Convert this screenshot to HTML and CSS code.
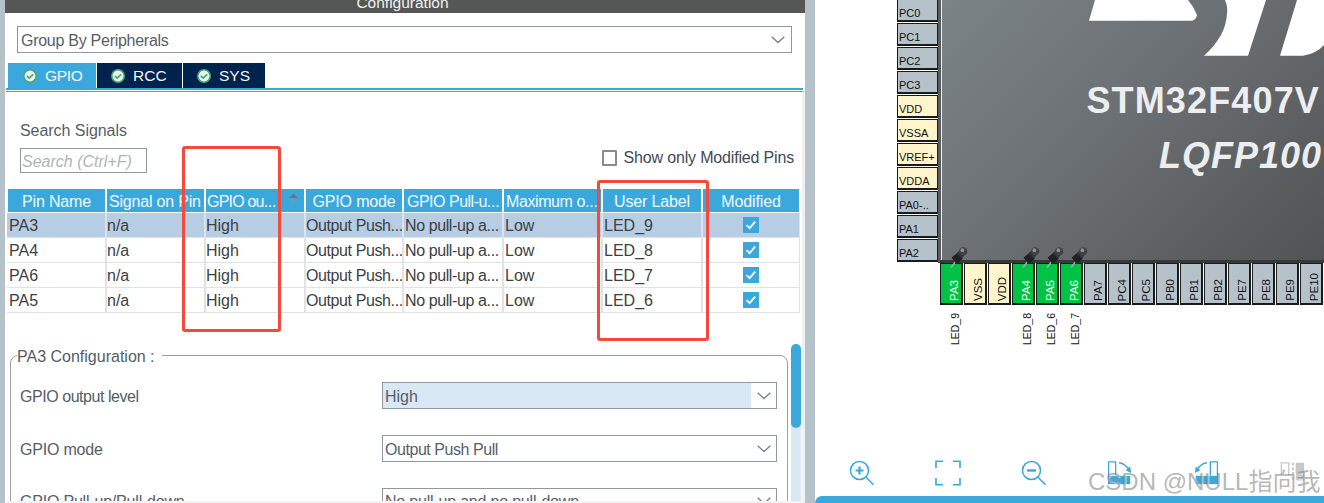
FILE: index.html
```html
<!DOCTYPE html>
<html lang="en">
<head>
<meta charset="utf-8">
<title>Configuration</title>
<link rel="stylesheet" href="styles.css">
</head>
<body>
<svg class="defs" width="0" height="0" aria-hidden="true">
  <defs>
    <symbol id="ok" viewBox="0 0 14 14">
      <circle cx="7" cy="7" r="6.2" fill="#eef4f0" stroke="#47a777" stroke-width="1.6"/>
      <path d="M3.8 6.8l2.4 2.3 4-3.8" fill="none" stroke="#47a777" stroke-width="1.7"/>
    </symbol>
    <symbol id="chev" viewBox="0 0 14 8">
      <path d="M.7.8L7 6.6 13.3.8" fill="none" stroke="#7d8286" stroke-width="1.4"/>
    </symbol>
    <symbol id="tick" viewBox="0 0 16 16">
      <rect width="16" height="16" fill="#3aa8dc"/>
      <path d="M3.6 8.2l3 3 5.6-6.6" fill="none" stroke="#fff" stroke-width="1.8"/>
    </symbol>
    <symbol id="pushpin" viewBox="0 0 18 21">
      <path d="M1 20.5L6.5 13.5" stroke="#a5a9ac" stroke-width="1.6"/>
      <path d="M1.6 10.5L8 5.5l4.8 6-3.2 3.6-4 .8z" fill="#1f2122"/>
      <path d="M6.5 6.2L10.5 2.8l4.6 4.4-3.2 4.4z" fill="#333638"/>
      <circle cx="13.2" cy="4.2" r="4" fill="#3f4345"/>
      <circle cx="12.4" cy="3.2" r="1.9" fill="#8d9194"/>
    </symbol>
  </defs>
</svg>
<div class="app">
  <section class="left">
    <div class="title">Configuration</div>
    <div class="select group">
      <span class="select-text">Group By Peripherals</span>
      <svg class="chev"><use href="#chev"/></svg>
    </div>
    <div class="tabs">
      <div class="tab tab-gpio active"><svg class="ok"><use href="#ok"/></svg>GPIO</div>
      <div class="tab tab-rcc"><svg class="ok"><use href="#ok"/></svg>RCC</div>
      <div class="tab tab-sys"><svg class="ok"><use href="#ok"/></svg>SYS</div>
    </div>
    <div class="pane">
      <div class="search-row">
        <div class="search">
          <div class="search-label">Search Signals</div>
          <input class="search-input" placeholder="Search (Ctrl+F)">
        </div>
        <label class="modified-only"><span class="box"></span>Show only Modified Pins</label>
      </div>

      <div class="table">
        <div class="thead">
          <div class="th center first">Pin Name</div>
          <div class="th tight">Signal on Pin</div>
          <div class="th sorted">GPIO ou<span class="dots">...</span>
            <svg class="sort" viewBox="0 0 12 12"><path d="M6 0l5 5H1z" fill="#6d7478"/><path d="M1 7h10l-5 5z" fill="#5f9fc4"/></svg>
          </div>
          <div class="th center">GPIO mode</div>
          <div class="th pull">GPIO Pull-u<span class="dots">...</span></div>
          <div class="th max">Maximum o<span class="dots">...</span></div>
          <div class="th center">User Label</div>
          <div class="th center">Modified</div>
        </div>
        <div class="tr selected">
          <div class="td first">PA3</div><div class="td">n/a</div><div class="td">High</div><div class="td cut">Output Push<span class="dots">...</span></div><div class="td cut">No pull-up a<span class="dots">...</span></div><div class="td">Low</div><div class="td">LED_9</div>
          <div class="td check"><svg class="tick"><use href="#tick"/></svg></div>
        </div>
        <div class="tr">
          <div class="td first">PA4</div><div class="td">n/a</div><div class="td">High</div><div class="td cut">Output Push<span class="dots">...</span></div><div class="td cut">No pull-up a<span class="dots">...</span></div><div class="td">Low</div><div class="td">LED_8</div>
          <div class="td check"><svg class="tick"><use href="#tick"/></svg></div>
        </div>
        <div class="tr">
          <div class="td first">PA6</div><div class="td">n/a</div><div class="td">High</div><div class="td cut">Output Push<span class="dots">...</span></div><div class="td cut">No pull-up a<span class="dots">...</span></div><div class="td">Low</div><div class="td">LED_7</div>
          <div class="td check"><svg class="tick"><use href="#tick"/></svg></div>
        </div>
        <div class="tr">
          <div class="td first">PA5</div><div class="td">n/a</div><div class="td">High</div><div class="td cut">Output Push<span class="dots">...</span></div><div class="td cut">No pull-up a<span class="dots">...</span></div><div class="td">Low</div><div class="td">LED_6</div>
          <div class="td check"><svg class="tick"><use href="#tick"/></svg></div>
        </div>
      </div>

      <div class="config-wrap">
        <fieldset class="config">
          <legend>PA3 Configuration :</legend>
          <div class="form">
            <div class="form-label narrow">GPIO output level</div>
            <div class="select field highlighted"><span class="select-text">High</span><span class="arrow"><svg class="chev"><use href="#chev"/></svg></span></div>
            <div class="form-label tight">GPIO mode</div>
            <div class="select field"><span class="select-text narrow">Output Push Pull</span><span class="arrow"><svg class="chev"><use href="#chev"/></svg></span></div>
            <div class="form-label tight last">GPIO Pull-up/Pull-down</div>
            <div class="select field last"><span class="select-text tight">No pull-up and no pull-down</span><span class="arrow"><svg class="chev"><use href="#chev"/></svg></span></div>
          </div>
        </fieldset>
        <div class="scrollbar"><div class="thumb"></div></div>
      </div>
    </div>
  </section>

  <section class="right">
    <div class="board">
      <div class="pins-left">
        <div class="pin gray">PC0</div>
        <div class="pin gray">PC1</div>
        <div class="pin gray">PC2</div>
        <div class="pin gray">PC3</div>
        <div class="pin power">VDD</div>
        <div class="pin power">VSSA</div>
        <div class="pin power">VREF+</div>
        <div class="pin power">VDDA</div>
        <div class="pin gray">PA0-..</div>
        <div class="pin gray">PA1</div>
        <div class="pin gray">PA2</div>
      </div>
      <div class="chip">
        <svg class="logo" viewBox="1080 0 244 60">
          <path d="M1095 0L1089 20.7H1192Q1196 20 1197 15Q1194 7 1188 0z" fill="#fff"/>
          <path d="M1225 0Q1228 7 1227 14Q1226 26 1221 35Q1214 47 1204 55.7H1248L1266 0z" fill="#fff"/>
          <path d="M1297 0L1280 55.7H1303Q1316 54 1324 45V0z" fill="#fff"/>
        </svg>
        <div class="chip-name">STM32F407V</div>
        <div class="chip-package">LQFP100</div>
      </div>
      <div class="pins-bottom">
        <div class="vpin green">PA3<svg class="pushpin"><use href="#pushpin"/></svg></div>
        <div class="vpin power">VSS</div>
        <div class="vpin power">VDD</div>
        <div class="vpin green">PA4<svg class="pushpin"><use href="#pushpin"/></svg></div>
        <div class="vpin green">PA5<svg class="pushpin"><use href="#pushpin"/></svg></div>
        <div class="vpin green">PA6<svg class="pushpin"><use href="#pushpin"/></svg></div>
        <div class="vpin gray">PA7</div>
        <div class="vpin gray">PC4</div>
        <div class="vpin gray">PC5</div>
        <div class="vpin gray">PB0</div>
        <div class="vpin gray">PB1</div>
        <div class="vpin gray">PB2</div>
        <div class="vpin gray">PE7</div>
        <div class="vpin gray">PE8</div>
        <div class="vpin gray">PE9</div>
        <div class="vpin gray">PE10</div>
      </div>
      <div class="pin-labels">
        <div class="pin-label">LED_9</div>
        <div class="pin-label"></div>
        <div class="pin-label"></div>
        <div class="pin-label">LED_8</div>
        <div class="pin-label">LED_6</div>
        <div class="pin-label">LED_7</div>
      </div>
    </div>

    <div class="toolbar">
      <svg class="tool" viewBox="0 0 26 26" fill="none" stroke="#3aa8dc">
        <circle cx="10.5" cy="10.5" r="9" stroke-width="1.5"/>
        <path d="M16.8 17l7.7 7.7" stroke-width="1.6"/>
        <path d="M6.5 10.5h8M10.5 6.5v8" stroke-width="2.2"/>
      </svg>
      <svg class="tool" viewBox="0 0 26 26" fill="none" stroke="#3aa8dc" stroke-width="1.6">
        <path d="M1 8V1.2h7M18 1.2h7V8M25 18v6.8h-7M8 24.8H1V18"/>
      </svg>
      <svg class="tool" viewBox="0 0 26 26" fill="none" stroke="#3aa8dc">
        <circle cx="10.5" cy="10.5" r="9" stroke-width="1.5"/>
        <path d="M16.8 17l7.7 7.7" stroke-width="1.6"/>
        <path d="M6 10.5h9" stroke-width="2.4"/>
      </svg>
      <svg class="tool" viewBox="0 0 28 26" fill="none" stroke="#3aa8dc">
        <path d="M1.7 16V1h7.6v15" stroke-width="1.4"/>
        <path d="M1 16h24v9H1z" fill="#3aa8dc" stroke="none"/>
        <path d="M13 2q7 1 11 8" stroke-width="1.5"/>
        <path d="M20 10l6 3-1-7z" fill="#3aa8dc" stroke="none"/>
      </svg>
      <svg class="tool" viewBox="0 0 28 26" fill="none" stroke="#3aa8dc">
        <path d="M18.7 16V1h7.6v15" stroke-width="1.4"/>
        <path d="M3 16h24v9H3z" fill="#3aa8dc" stroke="none"/>
        <path d="M15 2q-7 1-11 8" stroke-width="1.5"/>
        <path d="M8 10l-6 3 1-7z" fill="#3aa8dc" stroke="none"/>
      </svg>
      <svg class="tool" viewBox="0 0 28 26" fill="none">
        <path d="M2.5 16V2h8v14" stroke="#c4c8cb" stroke-width="1.4"/>
        <path d="M15 2v20" stroke="#c4c8cb" stroke-width="2" stroke-dasharray="3 2"/>
        <path d="M18 2h9v19h-9z" fill="#c4c8cb"/>
      </svg>
    </div>
    <div class="hbar"></div>
  </section>

  <div class="callout callout-output"></div>
  <div class="callout callout-label"></div>
  <div class="watermark">CSDN @NULL指向我</div>
</div>
</body>
</html>
```
FILE: styles.css
```css
* { box-sizing: border-box; }
html, body { margin: 0; padding: 0; }
body { font-family: "Liberation Sans", Arial, sans-serif; font-size: 16px; color: #4f5962; background: #b6c2c9; }
.defs { position: absolute; }
.tight { letter-spacing: -.2px; }
.narrow { letter-spacing: -.45px; }

.app {
  position: relative;
  display: flex;
  width: 1324px;
  height: 503px;
  overflow: hidden;
  padding-left: 5px;
  background: #b6c2c9;
}

/* Left panel */
.left {
  display: flex;
  flex-direction: column;
  flex: none;
  width: 800px;
  height: 503px;
  background: #fff;
  margin-right: 10px;
}
.title {
  flex: none;
  height: 13px;
  line-height: 5px;
  padding-right: 5px;
  overflow: hidden;
  text-align: center;
  background: #555756;
  color: #f1f1f1;
  font-size: 15.5px;
}
.select {
  display: flex;
  align-items: center;
  background: #fff;
  border: 1px solid #92979c;
  color: #586069;
}
.group {
  flex: none;
  justify-content: space-between;
  height: 27px;
  margin: 13px 13px 0 12px;
  padding: 0 6px 0 3px;
}
.group .select-text { padding-top: 2px; letter-spacing: -.27px; }
.chev { width: 14px; height: 8px; display: block; }

.tabs {
  flex: none;
  display: flex;
  gap: 1px;
  height: 27px;
  margin: 10px 2px 0 1px;
  padding-left: 2px;
  border-bottom: 2px solid #3aa8dc;
}
.tab {
  display: flex;
  align-items: center;
  gap: 8px;
  height: 25px;
  padding: 0 0 0 14px;
  background: #00234d;
  color: #f2f6f9;
  font-size: 15.5px;
}
.tab.active { background: #3aa8dc; padding-left: 15px; letter-spacing: -.3px; }
.tab-gpio { width: 88px; }
.tab-rcc { width: 85px; }
.tab-sys { width: 82px; }
.ok { width: 14px; height: 14px; flex: none; }

.pane {
  flex: 1;
  min-height: 0;
  margin: 1px 0 0 1px;
  border-top: 1px solid #3aa8dc;
  border-right: 3px solid #f0f1f3;
  border-bottom: 2px solid #f3f3f4;
  overflow: hidden;
}

.search-row {
  display: flex;
  justify-content: space-between;
  align-items: flex-end;
  padding: 30px 8px 0 14px;
}
.search-label { height: 18px; line-height: 18px; margin-bottom: 8px; color: #555e66; letter-spacing: -.05px; }
.search-input {
  display: block;
  width: 127px;
  height: 25px;
  padding: 2px 1px 0;
  border: 1px solid #92979c;
  background: #fff;
  font: italic 16px "Liberation Sans", Arial, sans-serif;
  outline: none;
}
.search-input::placeholder { color: #b0b3b6; opacity: 1; }
.modified-only { display: flex; align-items: center; gap: 7px; height: 25px; margin-bottom: 3px; color: #3d4a58; letter-spacing: -.17px; }
.box { width: 15px; height: 16px; border: 2px solid #8b8b8b; border-radius: 1px; background: #fff; }

/* Table */
.table { margin: 16px 0 0 1px; width: 793px; }
.thead, .tr {
  display: grid;
  grid-template-columns: 98px 97px 98px 96px 98px 97px 98px 96px;
  column-gap: 2px;
}
.thead { height: 23px; margin-bottom: 1px; }
.th {
  position: relative;
  background: #3aa8dc;
  color: #f2f8fc;
  line-height: 26px;
  padding-left: 2px;
  white-space: nowrap;
  overflow: hidden;
}
.th.center { text-align: center; padding-left: 0; letter-spacing: -.15px; }
.th.first { margin-left: 1px; }
.th.sorted { padding-left: 1px; letter-spacing: -.8px; }
.th.pull { padding-left: 3px; letter-spacing: -.5px; }
.th.max { letter-spacing: -.4px; }
.dots { letter-spacing: -.3px; }
.sort { position: absolute; right: 5px; top: 4px; width: 11px; height: 12px; }
.tr { height: 25px; padding-bottom: 1px; background: #e0e3e6; }
.td {
  background: #fff;
  color: #3c3f44;
  line-height: 26px;
  padding-left: 1px;
  white-space: nowrap;
  overflow: hidden;
}
.td:nth-child(-n+4) { padding-left: 0; }
.td.first { padding-left: 2px; }
.td.cut { letter-spacing: -.4px; }
.td.check { display: flex; align-items: center; justify-content: center; padding: 0; }
.tick { width: 16px; height: 16px; display: block; }
.tr.selected { background: #dbe4ee; }
.tr.selected .td { background: #b7cde4; }

/* Configuration group */
.config-wrap {
  display: flex;
  align-items: flex-start;
  gap: 3px;
  margin: 31px 0 0 4px;
}
.config {
  flex: none;
  width: 778px;
  height: 200px;
  margin: -1px 0 0;
  padding: 0;
  min-width: 0;
  border: 1.5px solid #9a9fa3;
  border-radius: 8px;
}
.config legend {
  margin-left: 6px;
  padding: 4px 7px 0 0;
  line-height: 20px;
  color: #555e66;
}
.form {
  display: grid;
  grid-template-columns: 362px 395px;
  grid-auto-rows: 27px;
  row-gap: 26px;
  align-items: center;
  padding: 15px 0 0 9px;
}
.form-label { color: #555e66; padding-top: 2px; }
.form .last { margin-top: -1px; }
.field { height: 27px; padding-left: 2px; }
.field .select-text { flex: 1; padding-top: 2px; }
.highlighted .select-text { background: #d9e8f5; align-self: stretch; line-height: 23px; margin: 0 0 0 -2px; padding-left: 2px; }
.arrow { flex: none; display: flex; align-items: center; justify-content: center; width: 25px; }
.scrollbar { flex: none; width: 10px; height: 160px; background: #d9e8f5; border-radius: 5px 5px 0 0; }
.thumb { height: 84px; background: #3aa8dc; border-radius: 5px; }

/* Right panel */
.right {
  display: flex;
  flex-direction: column;
  flex: 1;
  min-width: 0;
  height: 503px;
  background: #fff;
  overflow: hidden;
}
.board {
  display: grid;
  grid-template-columns: 41px 386px;
  margin: -1px 0 0 82px;
  font-size: 11px;
  color: #111;
}
.pins-left { display: flex; flex-direction: column; gap: 1px; }
.pin {
  height: 23px;
  padding: 6px 0 0 1px;
  border: 1px solid #1b1b1b;
  border-bottom-width: 2px;
  line-height: 15px;
  white-space: nowrap;
}
.gray { background: #b6c2ca; }
.power { background: #fff5cc; }

.chip {
  position: relative;
  display: flex;
  flex-direction: column;
  align-items: flex-end;
  height: 264px;
  padding: 84px 4px 0 0;
  border-left: 3px solid #5a5d5f;
  border-bottom: 3px solid #37393a;
  background: linear-gradient(135deg, #7c8387 0%, #6b7074 45%, #515353 100%);
  box-shadow: inset 1px 0 0 #f2f2f2;
  overflow: hidden;
}
.logo { position: absolute; left: 139px; top: 1px; width: 244px; height: 60px; }
.chip-name, .chip-package { position: relative; font-size: 36px; line-height: 36px; color: #eceef0; white-space: nowrap; font-weight: bold; }
.chip-name { letter-spacing: 1.15px; }
.chip-package { margin: 19px -2px 0 0; font-style: italic; letter-spacing: 1px; }

.pins-bottom {
  grid-column: 2;
  display: flex;
  gap: 1px;
  margin-left: 2px;
}
.vpin {
  position: relative;
  z-index: 1;
  flex: none;
  width: 23px;
  height: 42px;
  padding: 0 0 2px 0;
  border: 1px solid #1b1b1b;
  border-right-width: 2px;
  border-bottom-width: 2px;
  writing-mode: sideways-lr;
  line-height: 26px;
  font-size: 11.5px;
  text-align: left;
  white-space: nowrap;
}
.green { background: #00c244; color: #f4fff8; }
.pushpin { position: absolute; left: 9px; top: -17px; width: 18px; height: 21px; writing-mode: horizontal-tb; }

.pin-labels { grid-column: 2; display: flex; margin: 10px 0 0 2px; }
.pin-label {
  flex: none;
  width: 24px;
  height: 30px;
  writing-mode: sideways-lr;
  line-height: 30px;
  font-size: 10.5px;
  white-space: nowrap;
}

.toolbar {
  display: flex;
  gap: 60px;
  margin: auto 0 10px 34px;
  flex: none;
}
.tool { flex: none; width: 26px; height: 26px; display: block; }
.hbar { flex: none; height: 7px; background: #3aa8dc; border-top-left-radius: 7px; }

/* Overlays */
.callout {
  position: absolute;
  border: 3px solid #f44a3e;
  border-radius: 3px;
  pointer-events: none;
}
.callout-output { left: 182px; top: 146px; width: 99px; height: 186px; }
.callout-label { left: 597px; top: 180px; width: 112px; height: 161px; }
.watermark {
  position: absolute;
  z-index: 2;
  left: 1088px;
  top: 468px;
  font-family: "Liberation Sans", "Noto Sans CJK SC", sans-serif;
  font-size: 24px;
  line-height: 28px;
  white-space: nowrap;
  color: rgba(120, 120, 120, .55);
  text-shadow: 1px 1px 1px rgba(255, 255, 255, .6);
}
```
